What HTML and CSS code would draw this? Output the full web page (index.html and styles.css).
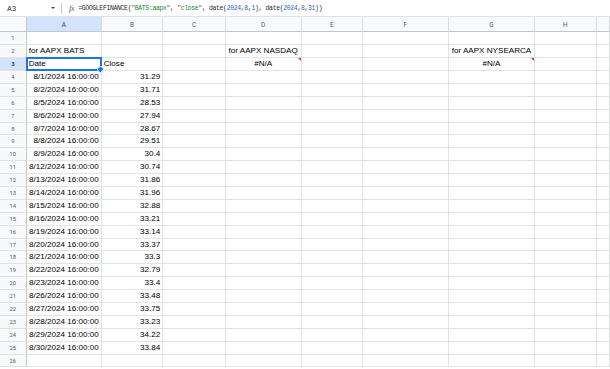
FILE: index.html
```html
<!DOCTYPE html>
<html lang="en">
  <head>
    <meta charset="utf-8" />
    <title>Sheet</title>
    <link rel="stylesheet" href="styles.css">
  </head>
  <body>
    <div class="formula-bar">
      <div class="name-box">A3</div>
      <span class="caret"></span>
      <span class="sep"></span>
      <span class="fx">fx</span>
      <div class="formula">=GOOGLEFINANCE(<span class="str">"BATS:aapx"</span>, <span class="str">"close"</span>, date(<span class="num">2024</span>,<span class="num">8</span>,<span class="num">1</span>), date(<span class="num">2024</span>,<span class="num">8</span>,<span class="num">31</span>))</div>
    </div>

    <div class="sheet">
      <div class="row head">
        <div class="rh corner"></div><div class="ch sel">A</div><div class="ch">B</div><div class="ch">C</div><div class="ch">D</div><div class="ch">E</div><div class="ch">F</div><div class="ch">G</div><div class="ch">H</div><div class="ch"></div>
      </div>
      <div class="row"><div class="rh">1</div><div class="c"></div><div class="c"></div><div class="c"></div><div class="c"></div><div class="c"></div><div class="c"></div><div class="c"></div><div class="c"></div><div class="c"></div></div>
      <div class="row"><div class="rh">2</div><div class="c">for AAPX BATS</div><div class="c"></div><div class="c"></div><div class="c mid">for AAPX NASDAQ</div><div class="c"></div><div class="c"></div><div class="c mid">for AAPX NYSEARCA</div><div class="c"></div><div class="c"></div></div>
      <div class="row"><div class="rh sel">3</div><div class="c active">Date</div><div class="c">Close</div><div class="c"></div><div class="c mid err">#N/A</div><div class="c"></div><div class="c"></div><div class="c mid err">#N/A</div><div class="c"></div><div class="c"></div></div>
      <div class="row"><div class="rh">4</div><div class="c num">8/1/2024 16:00:00</div><div class="c num">31.29</div><div class="c"></div><div class="c"></div><div class="c"></div><div class="c"></div><div class="c"></div><div class="c"></div><div class="c"></div></div>
      <div class="row"><div class="rh">5</div><div class="c num">8/2/2024 16:00:00</div><div class="c num">31.71</div><div class="c"></div><div class="c"></div><div class="c"></div><div class="c"></div><div class="c"></div><div class="c"></div><div class="c"></div></div>
      <div class="row"><div class="rh">6</div><div class="c num">8/5/2024 16:00:00</div><div class="c num">28.53</div><div class="c"></div><div class="c"></div><div class="c"></div><div class="c"></div><div class="c"></div><div class="c"></div><div class="c"></div></div>
      <div class="row"><div class="rh">7</div><div class="c num">8/6/2024 16:00:00</div><div class="c num">27.94</div><div class="c"></div><div class="c"></div><div class="c"></div><div class="c"></div><div class="c"></div><div class="c"></div><div class="c"></div></div>
      <div class="row"><div class="rh">8</div><div class="c num">8/7/2024 16:00:00</div><div class="c num">28.67</div><div class="c"></div><div class="c"></div><div class="c"></div><div class="c"></div><div class="c"></div><div class="c"></div><div class="c"></div></div>
      <div class="row"><div class="rh">9</div><div class="c num">8/8/2024 16:00:00</div><div class="c num">29.51</div><div class="c"></div><div class="c"></div><div class="c"></div><div class="c"></div><div class="c"></div><div class="c"></div><div class="c"></div></div>
      <div class="row"><div class="rh">10</div><div class="c num">8/9/2024 16:00:00</div><div class="c num">30.4</div><div class="c"></div><div class="c"></div><div class="c"></div><div class="c"></div><div class="c"></div><div class="c"></div><div class="c"></div></div>
      <div class="row"><div class="rh">11</div><div class="c num">8/12/2024 16:00:00</div><div class="c num">30.74</div><div class="c"></div><div class="c"></div><div class="c"></div><div class="c"></div><div class="c"></div><div class="c"></div><div class="c"></div></div>
      <div class="row"><div class="rh">12</div><div class="c num">8/13/2024 16:00:00</div><div class="c num">31.86</div><div class="c"></div><div class="c"></div><div class="c"></div><div class="c"></div><div class="c"></div><div class="c"></div><div class="c"></div></div>
      <div class="row"><div class="rh">13</div><div class="c num">8/14/2024 16:00:00</div><div class="c num">31.96</div><div class="c"></div><div class="c"></div><div class="c"></div><div class="c"></div><div class="c"></div><div class="c"></div><div class="c"></div></div>
      <div class="row"><div class="rh">14</div><div class="c num">8/15/2024 16:00:00</div><div class="c num">32.88</div><div class="c"></div><div class="c"></div><div class="c"></div><div class="c"></div><div class="c"></div><div class="c"></div><div class="c"></div></div>
      <div class="row"><div class="rh">15</div><div class="c num">8/16/2024 16:00:00</div><div class="c num">33.21</div><div class="c"></div><div class="c"></div><div class="c"></div><div class="c"></div><div class="c"></div><div class="c"></div><div class="c"></div></div>
      <div class="row"><div class="rh">16</div><div class="c num">8/19/2024 16:00:00</div><div class="c num">33.14</div><div class="c"></div><div class="c"></div><div class="c"></div><div class="c"></div><div class="c"></div><div class="c"></div><div class="c"></div></div>
      <div class="row"><div class="rh">17</div><div class="c num">8/20/2024 16:00:00</div><div class="c num">33.37</div><div class="c"></div><div class="c"></div><div class="c"></div><div class="c"></div><div class="c"></div><div class="c"></div><div class="c"></div></div>
      <div class="row"><div class="rh">18</div><div class="c num">8/21/2024 16:00:00</div><div class="c num">33.3</div><div class="c"></div><div class="c"></div><div class="c"></div><div class="c"></div><div class="c"></div><div class="c"></div><div class="c"></div></div>
      <div class="row"><div class="rh">19</div><div class="c num">8/22/2024 16:00:00</div><div class="c num">32.79</div><div class="c"></div><div class="c"></div><div class="c"></div><div class="c"></div><div class="c"></div><div class="c"></div><div class="c"></div></div>
      <div class="row"><div class="rh">20</div><div class="c num">8/23/2024 16:00:00</div><div class="c num">33.4</div><div class="c"></div><div class="c"></div><div class="c"></div><div class="c"></div><div class="c"></div><div class="c"></div><div class="c"></div></div>
      <div class="row"><div class="rh">21</div><div class="c num">8/26/2024 16:00:00</div><div class="c num">33.48</div><div class="c"></div><div class="c"></div><div class="c"></div><div class="c"></div><div class="c"></div><div class="c"></div><div class="c"></div></div>
      <div class="row"><div class="rh">22</div><div class="c num">8/27/2024 16:00:00</div><div class="c num">33.75</div><div class="c"></div><div class="c"></div><div class="c"></div><div class="c"></div><div class="c"></div><div class="c"></div><div class="c"></div></div>
      <div class="row"><div class="rh">23</div><div class="c num">8/28/2024 16:00:00</div><div class="c num">33.23</div><div class="c"></div><div class="c"></div><div class="c"></div><div class="c"></div><div class="c"></div><div class="c"></div><div class="c"></div></div>
      <div class="row"><div class="rh">24</div><div class="c num">8/29/2024 16:00:00</div><div class="c num">34.22</div><div class="c"></div><div class="c"></div><div class="c"></div><div class="c"></div><div class="c"></div><div class="c"></div><div class="c"></div></div>
      <div class="row"><div class="rh">25</div><div class="c num">8/30/2024 16:00:00</div><div class="c num">33.84</div><div class="c"></div><div class="c"></div><div class="c"></div><div class="c"></div><div class="c"></div><div class="c"></div><div class="c"></div></div>
      <div class="row"><div class="rh">26</div><div class="c"></div><div class="c"></div><div class="c"></div><div class="c"></div><div class="c"></div><div class="c"></div><div class="c"></div><div class="c"></div><div class="c"></div></div>
    </div>
  </body>
</html>
```

FILE: styles.css
```css
* {
  margin: 0;
  padding: 0;
  box-sizing: border-box;
}
body {
  width: 610px;
  height: 369px;
  overflow: hidden;
  background: #ffffff;
  font-family: "Liberation Sans", Arial, sans-serif;
  color: #000000;
}

/* formula bar */
.formula-bar {
  height: 17px;
  display: flex;
  align-items: center;
  border-bottom: 1px solid #e1e3e1;
  background: #ffffff;
}
.name-box {
  width: 45px;
  padding-left: 7px;
  font-family: Roboto, "Liberation Sans", sans-serif;
  font-size: 7.5px;
  color: #1f1f1f;
}
.caret {
  width: 0;
  height: 0;
  border-left: 2.5px solid transparent;
  border-right: 2.5px solid transparent;
  border-top: 2.5px solid #444746;
  margin-left: 6px;
}
.sep {
  width: 1px;
  height: 11px;
  background: #c4c7c5;
  margin-left: 6px;
}
.fx {
  margin-left: 7px;
  font-family: "Liberation Serif", serif;
  font-style: italic;
  font-size: 8.5px;
  color: #5f6368;
  letter-spacing: -0.5px;
}
.formula {
  margin-left: 4px;
  font-family: "Liberation Mono", monospace;
  font-size: 6.4px;
  letter-spacing: -0.3px;
  color: #1f1f1f;
  white-space: nowrap;
}
.formula .str {
  color: #188038;
}
.formula .num {
  color: #1a5fd0;
}

/* grid: one track per column, one per row */
.sheet {
  display: grid;
  grid-template-columns: 26.7px 75px 61.6px 62.4px 76px 61px 86.3px 86px 61.7px 13.3px;
  grid-template-rows: 15.3px repeat(26, 12.9px);
}
.row {
  display: contents;
}
.ch {
  background: #f8f9fa;
  border-right: 1px solid #dadce0;
  border-bottom: 1px solid #c4c7c5;
  font-family: Roboto, "Liberation Sans", sans-serif;
  font-size: 6.3px;
  color: #575757;
  text-align: center;
  line-height: 16px;
  overflow: hidden;
}
.ch.sel {
  background: #d3e3fd;
  color: #0b3a82;
}
.rh {
  background: #f8f9fa;
  border-right: 1px solid #c4c7c5;
  border-bottom: 1px solid #e1e3e1;
  font-family: Roboto, "Liberation Sans", sans-serif;
  font-size: 5.8px;
  color: #575757;
  text-align: center;
  line-height: 13px;
  overflow: hidden;
}
.rh.corner {
  border-bottom: 1px solid #c4c7c5;
}
.rh.sel {
  background: #d3e3fd;
  color: #0b3a82;
  font-weight: bold;
}
.c {
  position: relative;
  border-right: 1px solid #e2e3e3;
  border-bottom: 1px solid #e2e3e3;
  padding: 0 2px;
  font-size: 8.1px;
  line-height: 12.5px;
  white-space: nowrap;
}
.c.num {
  text-align: right;
}
.c.mid {
  text-align: center;
}
.c.err::after {
  content: "";
  position: absolute;
  top: 0;
  right: 0;
  border-top: 3px solid #db2f2f;
  border-left: 3px solid transparent;
}
.c.active::before {
  content: "";
  position: absolute;
  top: -1px;
  left: -1px;
  right: -1px;
  bottom: -1px;
  border: 2px solid #1a73e8;
}
.c.active::after {
  content: "";
  position: absolute;
  right: -3px;
  bottom: -3px;
  width: 5px;
  height: 5px;
  border-radius: 50%;
  background: #1a73e8;
  border: 1px solid #ffffff;
}
```
